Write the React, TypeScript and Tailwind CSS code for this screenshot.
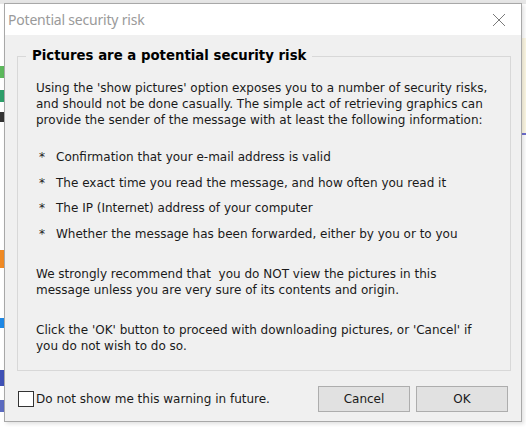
import { useState } from 'react';

const bullets = [
  'Confirmation that your e-mail address is valid',
  'The exact time you read the message, and how often you read it',
  'The IP (Internet) address of your computer',
  'Whether the message has been forwarded, either by you or to you',
];

export default function App() {
  const [dontShow, setDontShow] = useState(false);

  return (
    <div className="relative w-[526px] h-[427px] overflow-hidden bg-white font-['DejaVu_Sans',Tahoma,sans-serif]">
      {/* background app peeking out behind the dialog */}
      <div className="absolute left-0 top-0 w-[526px] h-[4px] bg-[#e6e6e6]" />
      <div className="absolute left-0 top-[66px] w-[4px] h-[12px] bg-[#5cb85c]" />
      <div className="absolute left-0 top-[90px] w-[4px] h-[12px] bg-[#2e9e6a]" />
      <div className="absolute left-0 top-[112px] w-[4px] h-[10px] bg-[#333]" />
      <div className="absolute left-0 top-[250px] w-[4px] h-[18px] bg-[#f08a24]" />
      <div className="absolute left-0 top-[318px] w-[4px] h-[10px] bg-[#1e88e5]" />
      <div className="absolute left-0 top-[370px] w-[4px] h-[16px] bg-[#3f51b5]" />
      <div className="absolute left-0 top-[400px] w-[4px] h-[12px] bg-[#5c6bc0]" />
      <div className="absolute right-0 top-[38px] w-[5px] h-[96px] bg-[#fdf8e4]" />
      <div className="absolute right-0 top-[133px] w-[5px] h-[2px] bg-[#6f6fd0]" />

      <div className="absolute left-[4px] top-[3px] w-[518px] h-[419px] border border-[#a8a8a8] bg-[#f0f0f0] flex flex-col shadow-[2px_2px_4px_rgba(0,0,0,0.12)]">
        <div className="h-[31px] bg-white flex items-center justify-between pl-[3px] pr-[15px] shrink-0">
          <span className="text-[14px] text-[#9a9a9a] font-['Noto_Sans',sans-serif] tracking-[-0.2px]">Potential security risk</span>
          <svg width="14" height="14" viewBox="0 0 14 14" className="text-[#7a7a7a]">
            <path d="M1 1 L13 13 M13 1 L1 13" stroke="currentColor" strokeWidth="1" fill="none" />
          </svg>
        </div>

        <fieldset className="mt-[11px] ml-[12px] mr-[10px] h-[325px] border border-[#d8d8d8] px-[18px] pb-0 text-[12px] text-[#1a1a1a] leading-[16px]">
          <legend className="px-[6px] ml-[-10px] text-[13.3px] font-bold text-black leading-[20px]">Pictures are a potential security risk</legend>
          <p className="mt-[14px]">
            Using the 'show pictures' option exposes you to a number of security risks, and should not be done casually. The simple act of retrieving graphics can provide the sender of the message with at least the following information:
          </p>
          <ul className="mt-[21px] flex flex-col gap-[9.5px]">
            {bullets.map((b) => (
              <li key={b} className="flex">
                <span className="w-[20px] shrink-0 pl-[3px]">*</span>
                <span>{b}</span>
              </li>
            ))}
          </ul>
          <p className="mt-[24px]">
            We strongly recommend that&nbsp; you do NOT view the pictures in this message unless you are very sure of its contents and origin.
          </p>
          <p className="mt-[24px]">
            Click the 'OK' button to proceed with downloading pictures, or 'Cancel' if you do not wish to do so.
          </p>
        </fieldset>

        <div className="mt-[15px] flex items-center pl-[13px] pr-[13px]">
          <label className="flex items-center gap-[2px] text-[12px] text-[#1a1a1a] cursor-default">
            <span
              onClick={() => setDontShow(!dontShow)}
              className="w-[16px] h-[16px] border border-[#333] bg-white flex items-center justify-center text-[11px] leading-none"
            >
              {dontShow ? '✓' : ''}
            </span>
            <span>Do not show me this warning in future.</span>
          </label>
          <div className="ml-auto flex gap-[6px]">
            <button className="w-[92px] h-[26px] border border-[#adadad] bg-[#e1e1e1] text-[12px] text-[#1a1a1a]">Cancel</button>
            <button className="w-[92px] h-[26px] border border-[#adadad] bg-[#e1e1e1] text-[12px] text-[#1a1a1a]">OK</button>
          </div>
        </div>
      </div>
    </div>
  );
}
